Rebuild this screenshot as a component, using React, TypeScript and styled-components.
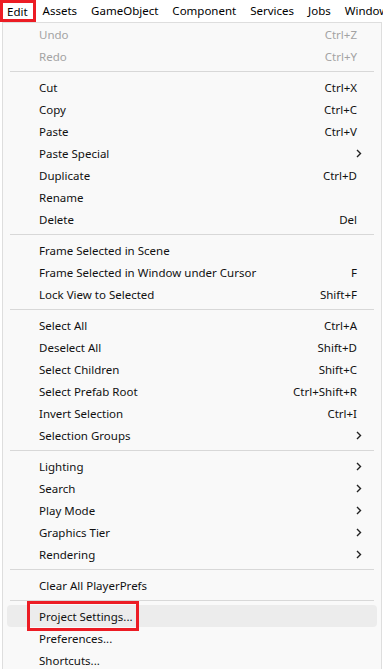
import React from "react";
import styled, { createGlobalStyle } from "styled-components";

type Entry =
  | { kind: "sep" }
  | { kind: "item"; label: string; shortcut?: string; sub?: boolean; disabled?: boolean; active?: boolean; marked?: boolean };

const sep: Entry = { kind: "sep" };
const item = (label: string, extra: Partial<Extract<Entry, { kind: "item" }>> = {}): Entry => ({
  kind: "item",
  label,
  ...extra,
});

const menuBar = ["Edit", "Assets", "GameObject", "Component", "Services", "Jobs", "Window"];

const entries: Entry[] = [
  item("Undo", { shortcut: "Ctrl+Z", disabled: true }),
  item("Redo", { shortcut: "Ctrl+Y", disabled: true }),
  sep,
  item("Cut", { shortcut: "Ctrl+X" }),
  item("Copy", { shortcut: "Ctrl+C" }),
  item("Paste", { shortcut: "Ctrl+V" }),
  item("Paste Special", { sub: true }),
  item("Duplicate", { shortcut: "Ctrl+D" }),
  item("Rename"),
  item("Delete", { shortcut: "Del" }),
  sep,
  item("Frame Selected in Scene"),
  item("Frame Selected in Window under Cursor", { shortcut: "F" }),
  item("Lock View to Selected", { shortcut: "Shift+F" }),
  sep,
  item("Select All", { shortcut: "Ctrl+A" }),
  item("Deselect All", { shortcut: "Shift+D" }),
  item("Select Children", { shortcut: "Shift+C" }),
  item("Select Prefab Root", { shortcut: "Ctrl+Shift+R" }),
  item("Invert Selection", { shortcut: "Ctrl+I" }),
  item("Selection Groups", { sub: true }),
  sep,
  item("Lighting", { sub: true }),
  item("Search", { sub: true }),
  item("Play Mode", { sub: true }),
  item("Graphics Tier", { sub: true }),
  item("Rendering", { sub: true }),
  sep,
  item("Clear All PlayerPrefs"),
  sep,
  item("Project Settings...", { active: true, marked: true }),
  item("Preferences..."),
  item("Shortcuts..."),
];

const GlobalStyle = createGlobalStyle`
  html, body {
    margin: 0;
    background: #ffffff;
    font-family: "Noto Sans", "Liberation Sans", sans-serif;
    overflow: hidden;
  }
`;

const Page = styled.div`
  width: 383px;
  height: 669px;
  display: flex;
  flex-direction: column;
  overflow: hidden;
`;

const Bar = styled.div`
  height: 22px;
  display: flex;
  align-items: stretch;
  background: #ffffff;
  flex-shrink: 0;
  overflow: hidden;
`;

const BarItem = styled.div<{ $marked?: boolean }>`
  display: flex;
  align-items: center;
  font-size: 11.5px;
  color: #000000;
  white-space: nowrap;
  box-sizing: border-box;
  border: ${(p) => (p.$marked ? "3px solid #ec1c24" : "none")};
  padding: ${(p) => (p.$marked ? "0 5px 0 4px" : "0 7px 1px")};
  flex-shrink: 0;
`;

const Panel = styled.div`
  flex: 1;
  margin-left: 2px;
  width: 380px;
  box-sizing: border-box;
  background: #f9f9f9;
  border: 1px solid #dedede;
  border-bottom: none;
  display: flex;
  flex-direction: column;
`;

const Row = styled.div<{ $active?: boolean; $disabled?: boolean }>`
  height: 22px;
  flex-shrink: 0;
  margin: 0 4px;
  padding: 0 20px 0 32px;
  display: flex;
  align-items: center;
  justify-content: space-between;
  border-radius: 4px;
  font-size: 11.5px;
  color: ${(p) => (p.$disabled ? "#a3a3a3" : "#111111")};
  background: ${(p) => (p.$active ? "#ececec" : "transparent")};
`;

const Label = styled.span<{ $marked?: boolean }>`
  position: relative;
  white-space: nowrap;

  &::after {
    content: "";
    display: ${(p) => (p.$marked ? "block" : "none")};
    position: absolute;
    left: -12px;
    right: -6px;
    top: -8px;
    bottom: -7px;
    border: 3px solid #ec1c24;
  }
`;

const Shortcut = styled.span`
  white-space: nowrap;
`;

const Arrow = styled.svg`
  width: 6px;
  height: 9px;
  margin-right: -5px;
`;

const Separator = styled.div`
  height: 9px;
  flex-shrink: 0;
  display: flex;
  align-items: center;
  padding: 0 7px;

  &::before {
    content: "";
    flex: 1;
    height: 1px;
    background: #d8d8d8;
  }
`;

const App: React.FC = () => {
  return (
    <Page>
      <GlobalStyle />
      <Bar>
        {menuBar.map((name, i) => (
          <BarItem key={name} $marked={i === 0}>
            {name}
          </BarItem>
        ))}
      </Bar>
      <Panel>
        {entries.map((e, i) =>
          e.kind === "sep" ? (
            <Separator key={i} />
          ) : (
            <Row key={i} $active={e.active} $disabled={e.disabled}>
              <Label $marked={e.marked}>{e.label}</Label>
              {e.shortcut && <Shortcut>{e.shortcut}</Shortcut>}
              {e.sub && (
                <Arrow viewBox="0 0 6 9">
                  <path d="M1 1 L4.5 4.5 L1 8" fill="none" stroke="#222" strokeWidth="1.4" />
                </Arrow>
              )}
            </Row>
          )
        )}
      </Panel>
    </Page>
  );
};

export default App;
